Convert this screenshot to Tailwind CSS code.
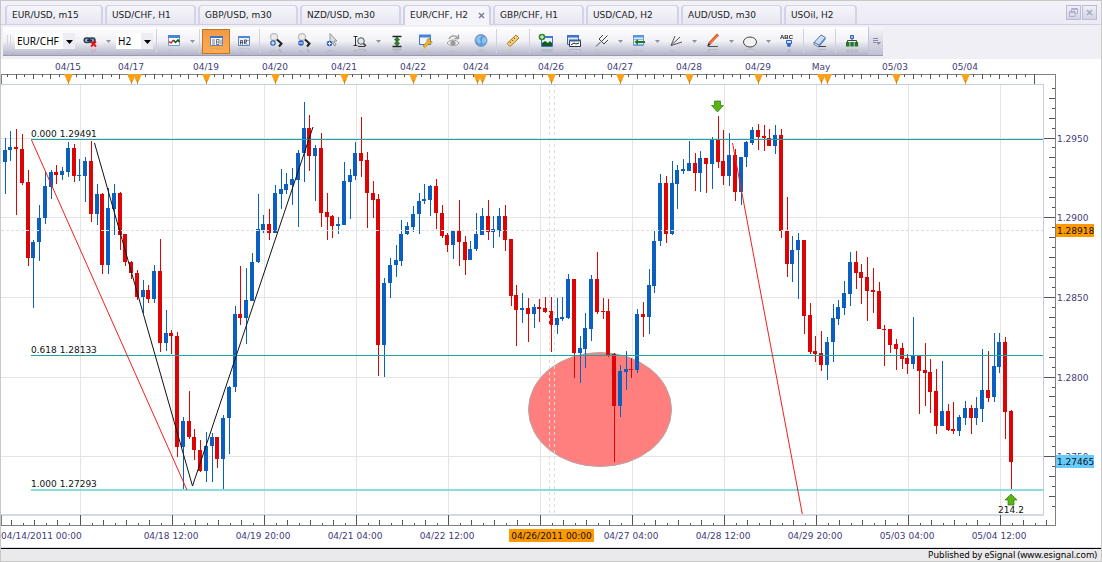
<!DOCTYPE html>
<html lang="en">
<head>
    <meta charset="UTF-8">
    <meta name="viewport" content="width=device-width, initial-scale=1.0">
    <title>EUR/CHF, H2 - Charts</title>
    <script src="https://cdn.jsdelivr.net/npm/@tailwindcss/browser@4"></script>
</head>
<body class="bg-white font-['DejaVu_Sans',sans-serif] text-[9px] text-[#222]">
<div class="flex min-h-screen flex-col border border-[#c8c8c8] bg-white">

    <!-- Tabs -->
    <header class="flex h-6 items-end justify-between border-b border-[#cfcfe2] bg-gradient-to-b from-[#f3f2f9] to-[#ecebf4] pl-1 pr-1">
        <nav class="flex items-end gap-0.5 leading-[18px]">
            <a href="#" class="h-[19px] w-[98px] rounded-t border-x-2 border-t border-[#d3d2e6] bg-gradient-to-b from-[#f5f5fb] to-[#e8e7f1] pl-[5px]">EUR/USD, m15</a>
            <a href="#" class="h-[19px] w-[91px] rounded-t border-x-2 border-t border-[#d3d2e6] bg-gradient-to-b from-[#f5f5fb] to-[#e8e7f1] pl-[5px]">USD/CHF, H1</a>
            <a href="#" class="h-[19px] w-[100px] rounded-t border-x-2 border-t border-[#d3d2e6] bg-gradient-to-b from-[#f5f5fb] to-[#e8e7f1] pl-[5px]">GBP/USD, m30</a>
            <a href="#" class="h-[19px] w-[101px] rounded-t border-x-2 border-t border-[#d3d2e6] bg-gradient-to-b from-[#f5f5fb] to-[#e8e7f1] pl-[5px]">NZD/USD, m30</a>
            <div class="-mb-px flex h-5 w-[88px] justify-between rounded-t border-x-2 border-t border-[#cfcee4] bg-[#f4f4fa] pl-[5px] pr-1">
                <a href="#">EUR/CHF, H2</a>
                <button aria-label="Close tab" class="flex items-center">
                    <svg class="size-[7px]" viewBox="0 0 7 7" fill="none" stroke="#77779a" stroke-width="1.4"><path d="M1 1l5 5M6 1L1 6"/></svg>
                </button>
            </div>
            <a href="#" class="h-[19px] w-[91px] rounded-t border-x-2 border-t border-[#d3d2e6] bg-gradient-to-b from-[#f5f5fb] to-[#e8e7f1] pl-[5px]">GBP/CHF, H1</a>
            <a href="#" class="h-[19px] w-[93px] rounded-t border-x-2 border-t border-[#d3d2e6] bg-gradient-to-b from-[#f5f5fb] to-[#e8e7f1] pl-[5px]">USD/CAD, H2</a>
            <a href="#" class="h-[19px] w-[101px] rounded-t border-x-2 border-t border-[#d3d2e6] bg-gradient-to-b from-[#f5f5fb] to-[#e8e7f1] pl-[5px]">AUD/USD, m30</a>
            <a href="#" class="h-[19px] w-[73px] rounded-t border-x-2 border-t border-[#d3d2e6] bg-gradient-to-b from-[#f5f5fb] to-[#e8e7f1] pl-[5px]">USOil, H2</a>
        </nav>
        <div class="flex gap-px self-center">
            <button aria-label="Restore" class="flex size-[15px] items-center justify-center border border-[#bcbcd4] bg-gradient-to-b from-[#f0f0f8] to-[#d3d3e4]">
                <svg class="size-[9px]" viewBox="0 0 9 9" fill="none" stroke="#b0b0cc"><path d="M2.500 3V.5h6v5H6M2.500 1.500h6M.5 3.500h5.500v5H.5zM.5 4.500H6"/></svg>
            </button>
            <button aria-label="Close" class="flex size-[15px] items-center justify-center border border-[#bcbcd4] bg-gradient-to-b from-[#f0f0f8] to-[#d3d3e4]">
                <svg class="size-[7px]" viewBox="0 0 7 7" fill="none" stroke="#a8a8c8" stroke-width="1.6"><path d="M1 1l5 5M6 1L1 6"/></svg>
            </button>
        </div>
    </header>

    <!-- Toolbar -->
    <div class="flex h-[34px] bg-[#f0eff6] pt-0.5 pl-0.5">
        <div class="flex h-[29px] items-center border-b border-[#9a9ab2] bg-gradient-to-b from-white via-[#f1f1f6] via-50% to-[#b4b4c8]">
            <div class="flex w-3 justify-center gap-0.5"><i class="h-3 w-px bg-[#d5d5e2]"></i><i class="h-3 w-px bg-[#d5d5e2]"></i></div>
            <div class="relative h-4 w-[60px] bg-white">
                <select aria-label="Symbol" class="h-4 w-full appearance-none pl-0.5 font-['Noto_Sans',sans-serif] text-[10px] leading-4 text-black"><option>EUR/CHF</option><option>EUR/USD</option></select>
                <span class="pointer-events-none absolute inset-y-0 right-0 flex w-3 items-center justify-center bg-[#ececf2]"><svg class="mt-0.5 h-1 w-[7px]" viewBox="0 0 7 4"><path d="M0 0h7L3.500 4z"/></svg></span>
            </div>
            <button aria-label="Link" class="flex w-[29px] justify-center">
                <svg class="size-4 [-webkit-box-reflect:below_-2px_linear-gradient(transparent_60%,#0004)]" viewBox="0 0 16 16" fill="none"><rect x="2.200" y="5" width="6" height="4.600" rx="2.300" fill="#9cc0e4" stroke="#2c3b52" stroke-width="1.500"/><rect x="7" y="5" width="6" height="4.600" rx="2.300" fill="#7fa3c8" stroke="#2c3b52" stroke-width="1.500"/><path d="M5 7.300h5" stroke="#1d2a3c" stroke-width="1.500"/><path d="M9 8.500l5 5M14 8.500l-5 5" stroke="#e81010" stroke-width="1.800"/></svg>
            </button>
            <button aria-label="Link options" class="flex w-[9px] justify-center"><svg class="h-[3px] w-[5px]" viewBox="0 0 5 3"><path d="M0 0h5L2.500 3z" fill="#8f8fa8"/></svg></button>
            <div class="relative ml-[3px] h-4 w-[37px] bg-white">
                <select aria-label="Period" class="h-4 w-full appearance-none pl-0.5 font-['Noto_Sans',sans-serif] text-[10px] leading-4 text-black"><option>H2</option><option>H1</option></select>
                <span class="pointer-events-none absolute inset-y-0 right-0 flex w-3 items-center justify-center bg-[#ececf2]"><svg class="mt-0.5 h-1 w-[7px]" viewBox="0 0 7 4"><path d="M0 0h7L3.500 4z"/></svg></span>
            </div>
            <i class="mx-[3px] h-6 w-px bg-[#d0d0de]"></i>
            <button aria-label="Chart style" class="flex w-7 justify-center">
                <svg class="size-4 [-webkit-box-reflect:below_-2px_linear-gradient(transparent_60%,#0004)]" viewBox="0 0 16 16" fill="none"><path d="M2.500 2.500h11v10h-11z" fill="#fff" stroke="#6f9ada"/><path d="M2 2h12v3H2z" fill="#4a84d8"/><path d="M3 8.500l2 1.500 2.500-3" stroke="#d22" stroke-width="1.500"/><path d="M7.500 7l2 2.500L12 7l1.500 2" stroke="#151" stroke-width="1.500"/></svg>
            </button>
            <button aria-label="Chart style options" class="flex w-[9px] justify-center"><svg class="h-[3px] w-[5px]" viewBox="0 0 5 3"><path d="M0 0h5L2.500 3z" fill="#8f8fa8"/></svg></button>
            <i class="mx-0.5 h-6 w-px bg-[#d0d0de]"></i>
            <button aria-label="Data window" aria-pressed="true" class="flex h-[25px] w-7 items-center justify-center border border-[#c5731c] bg-gradient-to-b from-[#f29a48] to-[#fdab50]">
                <svg class="h-3.5 w-4 [-webkit-box-reflect:below_-2px_linear-gradient(transparent_60%,#0004)]" viewBox="0 0 16 14" fill="none"><path d="M2.500 2.500h12v9h-12z" fill="#fff" stroke="#5f86c0"/><path d="M2 2h13v2H2z" fill="#3b74c8"/><path d="M4 6h3M4 8h3M4 10h3M8.500 5.500v5h2.500v-5zM8.500 8H11M13 5.500v5" stroke="#556" stroke-width=".8"/></svg>
            </button>
            <button aria-label="Labels" class="flex w-7 justify-center">
                <svg class="h-3.5 w-4 [-webkit-box-reflect:below_-2px_linear-gradient(transparent_60%,#0004)]" viewBox="0 0 16 14" fill="none"><path d="M2.500 2.500h11v9h-11z" fill="#e8f0fa" stroke="#5b86c4"/><path d="M2 2h12v2H2z" fill="#4c86da"/><path d="M4.500 10.500V6.500h2v4M4.500 8.500h2M8.500 10V6h2v2h-2l2.500 2.500M12 6v1" stroke="#445" stroke-width=".9"/></svg>
            </button>
            <i class="mx-px h-6 w-px bg-[#d0d0de]"></i>
            <button aria-label="Zoom in" class="ml-px flex w-7 justify-center">
                <svg class="size-4 [-webkit-box-reflect:below_-2px_linear-gradient(transparent_60%,#0004)]" viewBox="0 0 16 16" fill="none"><circle cx="6" cy="4" r="3.500" fill="#ececec" stroke="#bdbdbd" stroke-width="1.400"/><path d="M9 6.500l4.500 4-2.500 3" stroke="#222" stroke-width="2"/><circle cx="5" cy="10" r="2.800" fill="#2760c4"/><path d="M3.200 10h3.600M5 8.200v3.600" stroke="#fff"/></svg>
            </button>
            <button aria-label="Zoom out" class="flex w-7 justify-center">
                <svg class="size-4 [-webkit-box-reflect:below_-2px_linear-gradient(transparent_60%,#0004)]" viewBox="0 0 16 16" fill="none"><circle cx="6" cy="4" r="3.500" fill="#ececec" stroke="#bdbdbd" stroke-width="1.400"/><path d="M9 6.500l4.500 4-2.500 3" stroke="#222" stroke-width="2"/><circle cx="5" cy="10" r="2.800" fill="#2760c4"/><path d="M3.200 10h3.600" stroke="#fff"/></svg>
            </button>
            <button aria-label="Pointer" class="flex w-7 justify-center">
                <svg class="size-4 [-webkit-box-reflect:below_-2px_linear-gradient(transparent_60%,#0004)]" viewBox="0 0 16 16" fill="none"><path d="M6 .5v10l2.500-2 2 4.500 1.500-1-2-4h3z" fill="#dcdcde" stroke="#999"/><circle cx="5.500" cy="10.500" r="2.800" fill="#2760c4"/><path d="M3.700 10.500h3.600M5.500 8.700v3.600" stroke="#fff"/></svg>
            </button>
            <button aria-label="Fit" class="flex w-7 justify-center">
                <svg class="size-4 [-webkit-box-reflect:below_-2px_linear-gradient(transparent_60%,#0004)]" viewBox="0 0 16 16" fill="none"><path d="M3.500 3v10M1.500 3.500h4M1.500 12.500h4M6 13.500h7" stroke="#333"/><circle cx="9" cy="8" r="3.300" fill="#dde9f2" stroke="#555"/><path d="M11.500 10.500l2.500 2.500" stroke="#333" stroke-width="1.600"/></svg>
            </button>
            <button aria-label="Fit options" class="flex w-[9px] justify-center"><svg class="h-[3px] w-[5px]" viewBox="0 0 5 3"><path d="M0 0h5L2.500 3z" fill="#8f8fa8"/></svg></button>
            <button aria-label="Auto scale" class="flex w-7 justify-center">
                <svg class="size-4 [-webkit-box-reflect:below_-2px_linear-gradient(transparent_60%,#0004)]" viewBox="0 0 16 16" fill="none"><path d="M3.500 3.500h9M3.500 13.500h9" stroke="#222" stroke-width="1.300"/><path d="M8 4l2.500 3H9v3h1.500L8 13l-2.500-3H7V7H5.500z" fill="#2f8a2a" stroke="#174f15" stroke-width=".7"/></svg>
            </button>
            <button aria-label="Properties" class="flex w-7 justify-center">
                <svg class="size-4 [-webkit-box-reflect:below_-2px_linear-gradient(transparent_60%,#0004)]" viewBox="0 0 16 16" fill="none"><path d="M2.500 2.500h11v9h-11z" fill="#f1f6fc" stroke="#3f74c2"/><path d="M2 1.500h12v3H2z" fill="#4684dc"/><path d="M6 13l4-4.500c-.5-2 1-3.500 3-3l-1 2 1.500 1.500 1.500-.5c0 2-1.500 3-3.500 2.500L8 14.500z" fill="#f0b429" stroke="#b9800f" stroke-width=".7"/></svg>
            </button>
            <button aria-label="Preview" class="flex w-7 justify-center">
                <svg class="size-4 [-webkit-box-reflect:below_-2px_linear-gradient(transparent_60%,#0004)]" viewBox="0 0 16 16" fill="none" stroke="#9b9b9b"><path d="M2 10c3-4 9-4 12 0-3 3.500-9 3.500-12 0z" fill="#f0f0f0"/><circle cx="8" cy="10" r="2.200" fill="#999"/><path d="M4 6c2-4 7-4 9-1M13.500 1.500V5.500H9.500" stroke-width="1.300"/></svg>
            </button>
            <button aria-label="Web" class="flex w-7 justify-center">
                <svg class="size-4 [-webkit-box-reflect:below_-2px_linear-gradient(transparent_60%,#0004)]" viewBox="0 0 16 16" fill="none"><circle cx="8" cy="7.500" r="6" fill="#5a9edb" stroke="#7d9cc0"/><path d="M3.500 5c2-3 5-3 5-2s-2 2-2 3 2 2 1 4-3-1-4-2zM10 4l3 1v4l-3 2-1-3z" fill="#93c4ec"/></svg>
            </button>
            <i class="mx-px h-6 w-px bg-[#d0d0de]"></i>
            <button aria-label="Ruler" class="ml-px flex w-7 justify-center">
                <svg class="size-4 [-webkit-box-reflect:below_-2px_linear-gradient(transparent_60%,#0004)]" viewBox="0 0 16 16" fill="none"><path d="M2 10.500L11 2l3 3-9 8.500z" fill="#f3cf76" stroke="#ad7f2a"/><path d="M4.500 8.500L6 10M6.500 6.500L8 8M8.500 4.500L10 6" stroke="#8a5f18"/></svg>
            </button>
            <i class="mx-0.5 h-6 w-px bg-[#d0d0de]"></i>
            <button aria-label="Add indicator" class="flex w-7 justify-center">
                <svg class="size-4 [-webkit-box-reflect:below_-2px_linear-gradient(transparent_60%,#0004)]" viewBox="0 0 16 16" fill="none"><path d="M3.500 3.500h11v10h-11z" fill="#e8f2fc" stroke="#3f74c2"/><path d="M3 3h12v2H3z" fill="#3f7ad4"/><path d="M4 13v-3l3-2 3 2 2-2 2 2v3z" fill="#145c1a"/><circle cx="4" cy="4" r="3.300" fill="#2d8a25"/><path d="M2 4h4M4 2v4" stroke="#fff"/></svg>
            </button>
            <button aria-label="Indicator windows" class="flex w-7 justify-center">
                <svg class="size-4 [-webkit-box-reflect:below_-2px_linear-gradient(transparent_60%,#0004)]" viewBox="0 0 16 16" fill="none"><path d="M1.500 2.500h11v9h-11z" fill="#dfe9f6" stroke="#3f68a8"/><path d="M1 2h12v2.500H1z" fill="#3a72cc"/><path d="M3.500 7.500h11v6h-11z" fill="#fff" stroke="#26384f"/><path d="M3 6.500h12v2H3z" fill="#3d5f94"/><path d="M5 12l3-2 2 1 3-1" stroke="#222"/></svg>
            </button>
            <button aria-label="Pitchfork" class="flex w-7 justify-center">
                <svg class="size-4 [-webkit-box-reflect:below_-2px_linear-gradient(transparent_60%,#0004)]" viewBox="0 0 16 16" fill="none" stroke="#444"><path d="M2 13.500l4.500-4.500M5 6l5 5M5 6l4-4M7.500 8.500l6-6M10 11l4-4"/></svg>
            </button>
            <button aria-label="Pitchfork options" class="flex w-[9px] justify-center"><svg class="h-[3px] w-[5px]" viewBox="0 0 5 3"><path d="M0 0h5L2.500 3z" fill="#8f8fa8"/></svg></button>
            <button aria-label="Levels" class="flex w-7 justify-center">
                <svg class="size-4 [-webkit-box-reflect:below_-2px_linear-gradient(transparent_60%,#0004)]" viewBox="0 0 16 16" fill="none"><path d="M2.500 2.500h10v10h-10z" fill="#dfebfa" stroke="#6e9ad6"/><path d="M2 2h11v2.500H2z" fill="#5a93e0"/><path d="M3 6.500h9M3 11.500h9" stroke="#8fb3e2"/><path d="M5 9h9" stroke="#1d7a1d" stroke-width="2"/><path d="M7 6L3.500 9 7 12z" fill="#1d7a1d"/></svg>
            </button>
            <button aria-label="Levels options" class="flex w-[9px] justify-center"><svg class="h-[3px] w-[5px]" viewBox="0 0 5 3"><path d="M0 0h5L2.500 3z" fill="#8f8fa8"/></svg></button>
            <button aria-label="Fan" class="flex w-7 justify-center">
                <svg class="size-4 [-webkit-box-reflect:below_-2px_linear-gradient(transparent_60%,#0004)]" viewBox="0 0 16 16" fill="none" stroke="#555"><path d="M3 12.500L7 3M3 12.500L12 4M3 12.500L14 9"/></svg>
            </button>
            <button aria-label="Fan options" class="flex w-[9px] justify-center"><svg class="h-[3px] w-[5px]" viewBox="0 0 5 3"><path d="M0 0h5L2.500 3z" fill="#8f8fa8"/></svg></button>
            <button aria-label="Draw line" class="flex w-7 justify-center">
                <svg class="size-4 [-webkit-box-reflect:below_-2px_linear-gradient(transparent_60%,#0004)]" viewBox="0 0 16 16" fill="none"><path d="M4 11L13 1.500" stroke="#d9551e" stroke-width="2.800"/><path d="M5 10.500L12.500 2.500" stroke="#f7a36b"/><path d="M2 13.500l1.500-3.500 2 2z" fill="#333"/><path d="M3 13.500h10" stroke="#555"/></svg>
            </button>
            <button aria-label="Draw line options" class="flex w-[9px] justify-center"><svg class="h-[3px] w-[5px]" viewBox="0 0 5 3"><path d="M0 0h5L2.500 3z" fill="#8f8fa8"/></svg></button>
            <button aria-label="Ellipse" class="flex w-7 justify-center">
                <svg class="size-4 [-webkit-box-reflect:below_-2px_linear-gradient(transparent_60%,#0004)]" viewBox="0 0 16 16" fill="none" stroke="#444"><ellipse cx="8" cy="9" rx="6.500" ry="5" fill="#f3f3f5"/></svg>
            </button>
            <button aria-label="Ellipse options" class="flex w-[9px] justify-center"><svg class="h-[3px] w-[5px]" viewBox="0 0 5 3"><path d="M0 0h5L2.500 3z" fill="#8f8fa8"/></svg></button>
            <button aria-label="Text" class="flex w-7 justify-center">
                <svg class="size-4 [-webkit-box-reflect:below_-2px_linear-gradient(transparent_60%,#0004)]" viewBox="0 0 16 16" fill="none"><text x="1" y="6" font-size="6" font-weight="bold" fill="#222" font-family="Liberation Sans">ABC</text><path d="M7.500 7.500h5v3h-5z" fill="#cfe0fa" stroke="#2c5fc0"/><circle cx="10" cy="12" r="2" fill="#2c62cc"/></svg>
            </button>
            <i class="mx-0.5 h-6 w-px bg-[#d0d0de]"></i>
            <button aria-label="Erase" class="flex w-7 justify-center">
                <svg class="size-4 [-webkit-box-reflect:below_-2px_linear-gradient(transparent_60%,#0004)]" viewBox="0 0 16 16" fill="none"><path d="M2 9.500L9 2l4.500 2.500L7 12z" fill="#cfdff3" stroke="#5878a8"/><path d="M2 9.500L7 12v2l-5-2.500z" fill="#fff" stroke="#5878a8"/><path d="M7 12l6.500-7.500v2L7 14z" fill="#5c83bd"/><path d="M7 13.500h7" stroke="#444"/></svg>
            </button>
            <i class="mx-px h-6 w-px bg-[#d0d0de]"></i>
            <button aria-label="Object tree" class="ml-px flex w-7 justify-center">
                <svg class="size-4 [-webkit-box-reflect:below_-2px_linear-gradient(transparent_60%,#0004)]" viewBox="0 0 16 16" fill="none"><path d="M8 5v3M3.500 9V7.500h9V9" stroke="#444"/><path d="M6.500 2.500h3v3h-3z" fill="#9cc0f2" stroke="#2b60be"/><path d="M2 9h3.500v4.500H2zM6.300 9h3.500v4.500H6.300zM10.600 9h3.500v4.500h-3.500z" fill="#1f7a26"/></svg>
            </button>
            <button aria-label="Toolbar options" class="ml-0.5 flex h-[28px] w-[15px] items-center justify-center border-l border-[#c4c4d4] bg-gradient-to-b from-[#f6f6fa] to-[#c0c0d2]">
                <svg class="size-[9px]" viewBox="0 0 9 9" fill="none" stroke="#8a8aa4"><path d="M1 1.500h5M1 3.500h5M1 5.500h3"/><path d="M4 5h5L6.500 8z" fill="#8a8aa4" stroke="none"/></svg>
            </button>
        </div>
    </div>

    <!-- Chart -->
    <main class="grow border-b border-[#dcdcec]">
        <svg id="chart" class="block w-full" viewBox="1 59 1100 487" role="img" aria-label="EUR/CHF two hour candles">
            <g id="grid" stroke="#e4e4e4" shape-rendering="crispEdges"></g>
            <ellipse cx="600" cy="409.500" rx="71.500" ry="57" fill="#ff7f7f" stroke="#b5a5a5"/>
            <g id="candles" shape-rendering="crispEdges"></g>
            <g fill="none" shape-rendering="crispEdges">
                <path d="M1 230.500H1043" stroke="#dedede" stroke-dasharray="3 2"/>
                <path d="M549.500 84V515M554.500 84V515" stroke="#dedede" stroke-dasharray="3 3"/>
                <path d="M31 139.500H1043M31 355.500H1043" stroke="#1aa5a5"/>
                <path d="M31 490H1043" stroke="#88dede" stroke-width="2"/>
            </g>
            <g fill="none">
                <path d="M31.500 140L187 490M732.500 143L802.500 515" stroke="#f02020"/>
                <path d="M94.500 143L192.500 486L313 127" stroke="#111"/>
            </g>
            <g id="frame" fill="none" shape-rendering="crispEdges">
                <path d="M1 84.500H1043.500V515" stroke="#c5cee0"/>
                <path d="M1 515H1044" stroke="#d5d9e6" stroke-width="2"/>
                <path d="M1 74H1056M1055.500 74V525M1 525.500H1056M1.500 515V525M1.500 74V84" stroke="#808080"/>
            </g>
            <g id="ticks" stroke="#555" shape-rendering="crispEdges"></g>
            <g id="marks" fill="#f9a11b"></g>
            <g fill="#111">
                <text x="31" y="137">0.000 1.29491</text>
                <text x="31" y="353">0.618 1.28133</text>
                <text x="31" y="487">1.000 1.27293</text>
                <text x="1011" y="513" text-anchor="middle">214.2</text>
            </g>
            <g fill="#5bb318" stroke="#2f7a10" stroke-width=".7">
                <path d="M714.500 101h6v4.500h3l-6 6.500-6-6.500h3z"/>
                <path d="M1008 505h6v-5h3l-6-6-6 6h3z"/>
            </g>
            <g id="labels" fill="#3f3c7a"></g>
            <path d="M509 529h85v13h-85zM1056 224h38v13h-38z" fill="#ff9900"/>
            <path d="M1056 455h38v13h-38z" fill="#66ccff"/>
            <g fill="#111">
                <text x="551.500" y="539" text-anchor="middle">04/26/2011 00:00</text>
                <text x="1057" y="234">1.28918</text>
                <text x="1057" y="465">1.27465</text>
            </g>
        </svg>
    </main>

    <footer class="h-[13px] border-t border-black bg-[#eaeaea] pr-1 text-right font-['Noto_Sans',sans-serif] text-[9px] leading-3 text-black">Published by eSignal (www.esignal.com)</footer>
</div>

<script>
    // up/down, high, body top, body bottom, low
    const bars = `
D155,155,162,162 U138,150,162,194 U131,147,150,161 D129,147,149,215 D134,149,183,185 D170,182,258,266 U240,242,258,308
U205,218,242,261 U171,186,218,224 U170,172,187,199 D165,172,175,184 U167,171,175,180 U142,148,172,177 D144,148,176,182
U159,175,176,181 U157,161,176,202 D141,161,214,222 U184,194,214,225 D193,194,265,274 U188,208,265,274 U184,193,209,235
D192,193,235,250 D234,234,262,266 D261,262,273,279 D270,273,297,300 U280,290,297,313 D285,290,299,303 U265,271,299,303
D239,271,343,352 U310,333,343,351 D330,333,336,354 D332,336,447,457 U417,421,447,491 D391,421,437,439 D429,437,450,460
D440,450,471,472 U432,446,471,482 U433,437,446,482 D437,437,459,468 U415,418,459,490 U386,387,418,454 U306,314,387,392
D266,314,318,325 U268,300,318,344 U253,262,301,301 U194,229,262,263 U215,224,230,233 D209,224,233,240 U185,193,233,233
U169,189,194,209 U173,184,190,194 U168,179,185,205 U150,153,180,227 U102,128,153,182 D115,128,156,171 U145,148,156,201
D133,148,213,227 D193,212,217,240 D215,216,226,238 U217,224,226,234 U162,181,225,225 U169,175,182,219 U142,153,176,180
D117,153,161,177 D152,160,193,228 D181,193,200,218 D194,199,345,376 U278,283,345,377 U258,265,283,298 U245,260,265,277
U220,234,261,266 U222,226,234,235 U206,214,227,232 U193,201,214,234 U184,199,201,204 U185,186,200,216 D179,186,213,229
D205,213,236,238 D233,235,245,252 U231,231,245,259 D200,231,242,266 D236,242,260,275 U241,249,260,260 U213,234,249,251
U208,216,235,235 D200,216,232,240 U216,229,232,248 U208,216,231,237 D205,216,240,251 D239,239,296,306 D285,295,310,346
U293,308,310,323 D298,308,314,342 U304,307,314,328 D299,307,309,322 D297,308,312,313 D297,311,325,352 U298,318,325,334
U297,317,319,321 U274,279,318,319 D279,279,353,378 U336,348,353,383 U313,328,349,368 U275,279,329,341 D252,279,312,314
D298,311,312,319 D299,311,355,357 D353,354,406,462 U365,371,406,417 U351,369,372,390 D358,369,370,378 U309,314,370,373
D302,314,317,337 U269,285,317,334 U231,241,286,293 U174,183,241,246 D176,183,234,243 U161,183,234,235 U165,170,184,209
U159,169,171,174 U141,163,171,171 D153,163,173,191 U151,158,173,192 D158,158,164,193 U137,140,164,189 D116,140,162,168
D130,161,176,185 U133,155,176,186 D149,155,192,201 U157,157,192,205 U141,142,157,167 U127,130,143,145 D124,130,137,150
D125,136,138,151 D129,138,146,146 U125,135,146,154 D129,135,231,238 D197,231,264,277 U236,250,264,282 U233,240,250,299
D240,240,316,334 D303,315,352,354 D336,351,354,362 D331,353,365,371 U337,342,365,380 U304,318,342,362 U300,307,319,325
U281,293,308,315 U252,262,294,306 D251,262,273,289 D264,272,278,304 D257,277,291,321 D268,290,292,313 D282,291,329,329
D325,329,330,366 D329,329,345,353 D339,344,349,370 D343,348,359,369 D354,358,364,374 U317,356,364,369 D355,355,371,414
D343,370,373,406 D359,372,392,413 D369,391,426,434 U361,411,426,426 D404,411,430,431 D402,429,431,434 U415,417,431,436
U401,408,418,425 D405,408,418,434 U397,408,418,425 U349,390,409,422 D351,390,398,402 U333,366,397,402 U333,342,367,373
D337,342,412,439 D410,411,462,490`.trim().split(/\s+/);

    const put = (id, html) => { document.getElementById(id).innerHTML = html; };
    const line = (x1, y1, x2, y2) => `<path d="M${x1} ${y1}L${x2} ${y2}"/>`;
    const text = (x, y, s, anchor) => `<text x="${x}" y="${y}" text-anchor="${anchor}">${s}</text>`;

    put('candles', bars.map((b, i) => {
        const [high, top, bottom, low] = b.slice(1).split(',').map(Number);
        const x = Math.floor(5.2 + (i - 1) * 5.75);
        const color = b[0] === 'U' ? '#0a5fc0' : '#dc0404';
        return `<g fill="${color}"><rect x="${x}" y="${high}" width="1" height="${low - high}"/>` +
            `<rect x="${x - 2}" y="${top}" width="4" height="${Math.max(bottom - top, 1)}"/></g>`;
    }).join(''));

    let grid = '', ticks = '', marks = '', labels = '';

    // time axis: a grid line each 92px with eight ticks in between
    for (let k = -6; k <= 84; k++) {
        const x = Math.floor(80.5 + k * 11.5) + 0.5;
        const major = k % 8 === 0;
        if (major) grid += line(x, 85, x, 514);
        ticks += line(x, major ? 515 : k % 2 ? 523 : 520, x, 525);
    }

    // price axis
    for (let k = -5; k <= 37; k++) {
        const y = Math.floor(138 + k * 9.96) + 0.5;
        const major = k % 8 === 0;
        if (major) {
            grid += line(1, y, 1043, y);
            labels += text(1057, y + 3.5, (1.295 - k / 8 * 0.005).toFixed(4), 'start');
        }
        ticks += line(major ? 1044 : k % 2 ? 1052 : 1049, y, 1055, y);
    }

    // session axis on top
    for (let k = 0; k < 120; k++) {
        const x = Math.floor(7.7 + k * 8.625) + 0.5;
        if (x < 1050) ticks += line(x, 74, x, k === 119 ? 84 : k % 2 ? 79 : 77);
    }

    [68, 131, 137, 206, 275, 344, 413, 477, 482, 551, 620, 689, 758, 821, 827, 896, 965].forEach(x => {
        marks += `<path d="M${x - 3.5} 74h8v1l-3 7h-2l-3-7z"/><path d="M${x} 80h1v4h-1z" fill="#c98a2a"/>`;
    });

    [['04/15', 68], ['04/17', 131], ['04/19', 206], ['04/20', 275], ['04/21', 344], ['04/22', 413], ['04/24', 476],
     ['04/26', 551], ['04/27', 620], ['04/28', 689], ['04/29', 758], ['May', 821], ['05/03', 895], ['05/04', 965]
    ].forEach(([s, x]) => { labels += text(x, 70, s, 'middle'); });

    labels += text(1, 539, '04/14/2011 00:00', 'start');
    [['04/18 12:00', 171], ['04/19 20:00', 263], ['04/21 04:00', 355], ['04/22 12:00', 447], ['04/27 04:00', 631],
     ['04/28 12:00', 723], ['04/29 20:00', 815], ['05/03 04:00', 907], ['05/04 12:00', 999]
    ].forEach(([s, x]) => { labels += text(x, 539, s, 'middle'); });

    put('grid', grid);
    put('ticks', ticks);
    put('marks', marks);
    put('labels', labels);
</script>
</body>
</html>
